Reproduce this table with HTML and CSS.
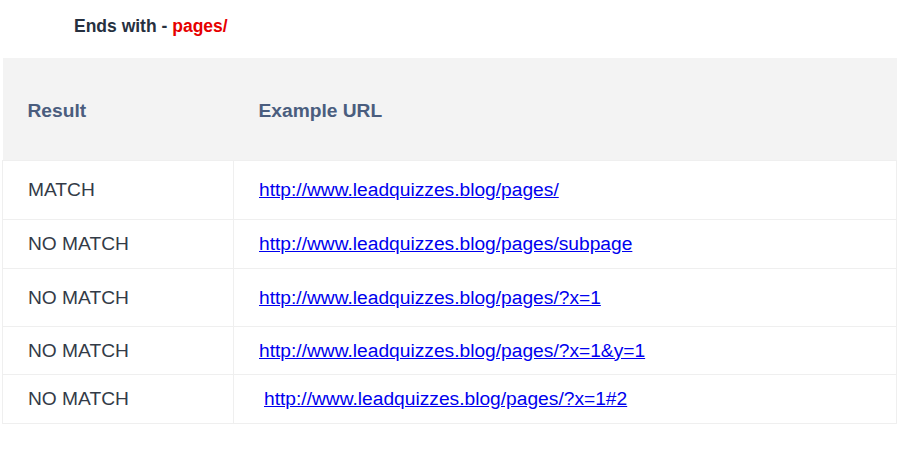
FILE: index.html
```html
<html>
	<head>
		<title>Ends with - pages/</title>
		<link rel="stylesheet" href="styles.css">
	</head>
	<body>
		<h4 class="rule-title">Ends with - <span class="rule-value">pages/</span></h4>
		<table class="url-table">
			<thead>
				<tr>
					<th class="col-result">Result</th>
					<th>Example URL</th>
				</tr>
			</thead>
			<tbody>
				<tr class="h59">
					<td>MATCH</td>
					<td><a href="#">http://www.leadquizzes.blog/pages/</a></td>
				</tr>
				<tr class="h49">
					<td>NO MATCH</td>
					<td><a href="#">http://www.leadquizzes.blog/pages/subpage</a></td>
				</tr>
				<tr class="h58">
					<td>NO MATCH</td>
					<td><a href="#">http://www.leadquizzes.blog/pages/?x=1</a></td>
				</tr>
				<tr class="h48">
					<td>NO MATCH</td>
					<td><a href="#">http://www.leadquizzes.blog/pages/?x=1&amp;y=1</a></td>
				</tr>
				<tr class="h49">
					<td>NO MATCH</td>
					<td><a class="indent" href="#">http://www.leadquizzes.blog/pages/?x=1#2</a></td>
				</tr>
			</tbody>
		</table>
	</body>
</html>
```

FILE: styles.css
```css
body {
	margin: 0;
	padding: 16px 7px 0 2px;
	background: #fff;
	font-family: "Liberation Sans", Arial, sans-serif;
	color: #333b47;
}
.rule-title {
	margin: 0 0 22px 72px;
	font-size: 17.5px;
	line-height: 20px;
	font-weight: bold;
	color: #26303f;
}
.rule-value {
	color: #e60000;
}
.url-table {
	width: 100%;
	border-collapse: collapse;
	font-size: 19.2px;
}
.url-table th {
	background: #f3f3f3;
	color: #4a5d7e;
	font-weight: bold;
	text-align: left;
	height: 102px;
	padding: 4px 0 0 25px;
	box-sizing: border-box;
}
.url-table td {
	border: 1px solid #efefef;
	padding: 1px 0 0 25px;
	box-sizing: border-box;
}
.url-table tr.h59 td {
	height: 59px;
}
.url-table tr.h58 td {
	height: 58px;
}
.url-table tr.h49 td {
	height: 49px;
}
.url-table tr.h48 td {
	height: 48px;
}
.url-table .col-result {
	width: 231px;
}
.url-table a {
	color: #0000ee;
	text-decoration: underline;
}
.url-table a.indent {
	margin-left: 5px;
}
```
